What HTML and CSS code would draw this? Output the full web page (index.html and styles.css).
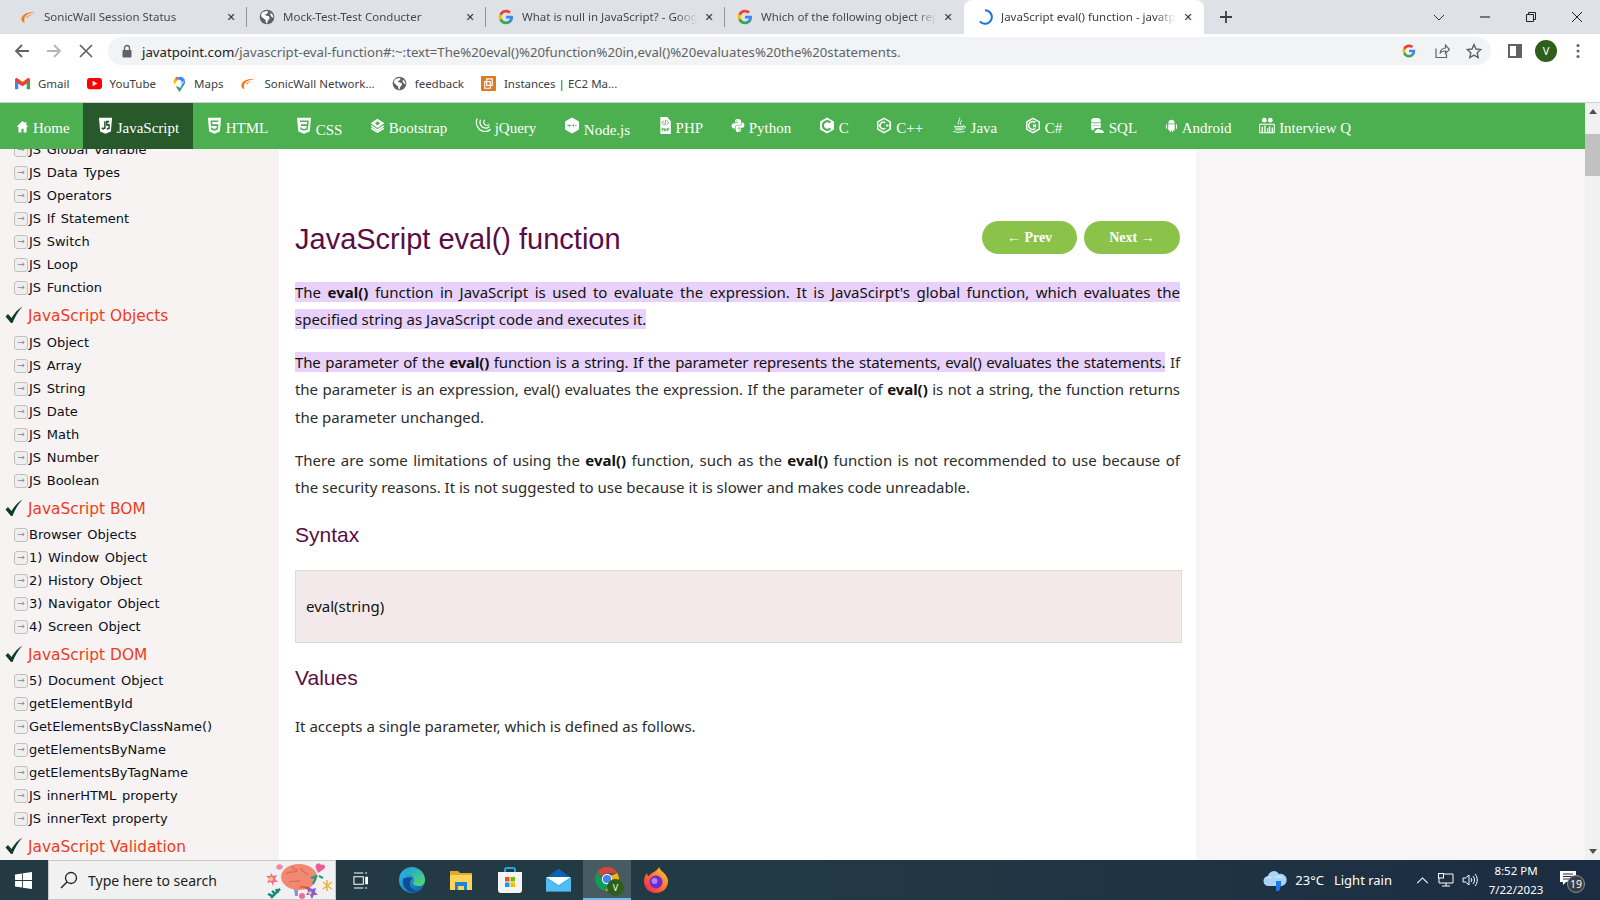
FILE: index.html
```html
<!DOCTYPE html>
<html lang="en">
<head>
<meta charset="utf-8">
<title>JavaScript eval() function - javatpoint</title>
<link rel="stylesheet" href="styles.css">
</head>
<body>
<svg class="defs" width="0" height="0" aria-hidden="true">
  <defs>
    <symbol id="g" viewBox="0 0 24 24">
      <path fill="#4285F4" d="M22.56 12.25c0-.78-.07-1.53-.2-2.25H12v4.26h5.92c-.26 1.37-1.04 2.53-2.21 3.31v2.77h3.57c2.08-1.92 3.28-4.74 3.28-8.09z"/>
      <path fill="#34A853" d="M12 23c2.97 0 5.46-.98 7.28-2.66l-3.57-2.77c-.98.66-2.23 1.06-3.71 1.06-2.86 0-5.29-1.93-6.16-4.53H2.18v2.84C3.99 20.53 7.7 23 12 23z"/>
      <path fill="#FBBC05" d="M5.84 14.09c-.22-.66-.35-1.36-.35-2.09s.13-1.43.35-2.09V7.07H2.18C1.43 8.55 1 10.22 1 12s.43 3.45 1.18 4.93l2.85-2.22.81-.62z"/>
      <path fill="#EA4335" d="M12 5.38c1.62 0 3.06.56 4.21 1.64l3.15-3.15C17.45 2.09 14.97 1 12 1 7.7 1 3.99 3.47 2.18 7.07l3.66 2.84c.87-2.6 3.3-4.53 6.16-4.53z"/>
    </symbol>
    <symbol id="sonic" viewBox="0 0 24 24">
      <path fill="#f47a20" d="M2 15C3 8 11 4 23 5 15 6 10 8 8 11 6 14 6 18 7 21 4 20 2 18 2 15z"/>
      <path fill="#f9a45c" d="M9 12c2-2 7-4 12-4-5 1-8 3-10 6z"/>
    </symbol>
    <symbol id="globe" viewBox="0 0 24 24">
      <circle cx="12" cy="12" r="11" fill="#5f6368"/>
      <path fill="#fff" d="M5 5c2 0 4-2 6-2l3 1-2 3-3 1 2 2 4 1 1 3-3 4-1 4c-2-1-2-3-2-5l-2-2-4-3-1-3zM17 6l3 2 2 5-3-1-2-3z"/>
    </symbol>
    <symbol id="chk" viewBox="0 0 18 18">
      <path fill="#0f3d2a" d="M0.500 10.500 3 8 6.500 12C9.500 7 13 3 17.500 0.500 13 5.500 10 10.500 7.500 17H6z"/>
    </symbol>
    <symbol id="n-home" viewBox="0 0 24 24"><path fill="#fff" d="M12 2 1 12.5h3.5V23h5.5v-7h4v7h5.500V12.500H23l-4-3.800V3.500h-3v2.400z"/></symbol>
    <symbol id="n-js" viewBox="0 0 24 24" preserveAspectRatio="none">
      <path fill="#fff" d="M1.500 1h21l-1.900 19.500L12 23.500l-8.600-3z"/>
      <path fill="none" stroke="#27592a" stroke-width="2.400" d="M11 6v9.500l-2.600 1.200L6 15.700M18 6.500h-4v4.500h3.700v5l-3.700 1"/>
    </symbol>
    <symbol id="n-html" viewBox="0 0 24 24" preserveAspectRatio="none">
      <path fill="#fff" d="M1.500 1h21l-1.900 19.500L12 23.500l-8.600-3z"/>
      <path fill="none" stroke="#4caf50" stroke-width="2.400" d="M18 6H7l.5 5.500H17l-.6 5.300L12 18l-4.300-1.200-.2-2"/>
    </symbol>
    <symbol id="n-css" viewBox="0 0 24 24" preserveAspectRatio="none">
      <path fill="#fff" d="M1.500 1h21l-1.900 19.500L12 23.500l-8.600-3z"/>
      <path fill="none" stroke="#4caf50" stroke-width="2.200" d="M6 6h12l-.6 5.500H7.500M17.400 11.500l-.7 5.300L12 18l-4.300-1.200-.2-2"/>
    </symbol>
    <symbol id="n-bs" viewBox="0 0 24 24">
      <path fill="#fff" d="M12 1 23 8.500 12 16 1 8.500z"/>
      <path fill="#4caf50" d="M12 5l4 3.500L12 12 8 8.500z"/>
      <path fill="none" stroke="#fff" stroke-width="2.400" d="M2 12.500 12 19.500l10-7M2 16.500 12 22.500l10-6"/>
    </symbol>
    <symbol id="n-jq" viewBox="0 0 24 24">
      <path fill="none" stroke="#fff" stroke-width="1.800" stroke-linecap="round" d="M3 2C0 10 5 21 15 21c3 0 6-1 8-3M8 4C6 10 10 16 16 16c2 0 4-.8 5-2M14 4c-2 4 0 8 4 8 1 0 2-.4 3-1"/>
    </symbol>
    <symbol id="n-node" viewBox="0 0 24 24">
      <path fill="#fff" d="M12 0 22.500 6v12L12 24 1.500 18V6z"/>
      <path fill="none" stroke="#4caf50" stroke-width="1.300" d="M5 12h2.500M9 12h2M13 12h2M16.500 12h2.500M8 10v4M14 10v4"/>
    </symbol>
    <symbol id="n-php" viewBox="0 0 24 24" preserveAspectRatio="none">
      <path fill="#fff" d="M4 0h12l6 6v18H4z"/>
      <path fill="none" stroke="#4caf50" stroke-width="1.400" d="M10 5 7 8l3 3M15 5l3 3-3 3M13.500 4l-2 8M7 20v-4h2v2H7M11 20v-4M11 18h2.500M13.500 16v4M16 20v-4h2v2h-2"/>
    </symbol>
    <symbol id="n-py" viewBox="0 0 24 24">
      <path fill="#fff" d="M12 1C7 1 7 3 7 4.500V7h5.500v1H5C2.500 8 1 10 1 12.500S2.500 17 5 17h2v-2.800C7 12.300 8.500 11 10.500 11h4c1.800 0 2.900-1.100 2.900-2.800V4.500C17.400 2.500 15 1 12 1z"/>
      <path fill="#fff" d="M12 23c5 0 5-2 5-3.500V17h-5.500v-1H19c2.500 0 4-2 4-4.500S21.500 7 19 7h-.6v2c0 2-1.500 3-3.500 3h-4.400C8.700 12 8 13 8 14.500v5C8 21.500 9 23 12 23z"/>
      <circle cx="10" cy="4" r="1" fill="#4caf50"/><circle cx="14" cy="20" r="1" fill="#4caf50"/>
    </symbol>
    <symbol id="n-c" viewBox="0 0 24 24">
      <path fill="#fff" d="M12 0 22.500 6v12L12 24 1.500 18V6z"/>
      <path fill="none" stroke="#4caf50" stroke-width="3.200" d="M17 7.500a6.500 6.500 0 1 0 0 9"/>
    </symbol>
    <symbol id="n-cpp" viewBox="0 0 24 24">
      <path fill="none" stroke="#fff" stroke-width="2.200" d="M12 1.300 21.400 6.600v10.800L12 22.700 2.600 17.400V6.600z"/>
      <path fill="none" stroke="#fff" stroke-width="2.400" d="M14 8a5 5 0 1 0 0 8M15 12h3M16.500 10.500v3M19 12h2.500M20.200 10.500v3"/>
    </symbol>
    <symbol id="n-cs" viewBox="0 0 24 24">
      <path fill="none" stroke="#fff" stroke-width="2.200" d="M12 1.300 21.400 6.600v10.800L12 22.700 2.600 17.400V6.600z"/>
      <path fill="none" stroke="#fff" stroke-width="2.400" d="M15.500 7.500a6 6 0 1 0 0 9"/>
      <path fill="none" stroke="#fff" stroke-width="1.200" d="M13 10v5M15.500 10v5M12 11.500h5M12 13.500h5"/>
    </symbol>
    <symbol id="n-java" viewBox="0 0 24 24">
      <path fill="none" stroke="#fff" stroke-width="1.400" stroke-linecap="round" d="M13 1c2 3-4 5-2 9M16 5c-3 2-2 4-1 6M5 13c4 1 10 1 14 0M6 15.500c3 .8 9 .8 12 0M7 18c3 .7 7 .7 10 0M4 21c5 1.500 11 1.500 16 0M19 13c3-1 4 2 0 4"/>
    </symbol>
    <symbol id="n-sql" viewBox="0 0 24 24">
      <path fill="#fff" d="M2 3c0-4 15-4 15 0v13H9c-2 0-3 2-3 3.500H4c-1.500 0-2-1-2-2z"/>
      <path fill="#fff" d="M10 24c-2 0-3-1-2.500-2.500.3-1 1-1.500 2-1.500 .5-2.500 5-3.500 7-1 2-.5 5 .5 6 5z"/>
      <path fill="none" stroke="#4caf50" stroke-width="1.300" d="M2 6.500c4 2 11 2 15 0M5 12h2M8.500 12h2M12 12h2"/>
    </symbol>
    <symbol id="n-and" viewBox="0 0 24 24">
      <path fill="#fff" d="M6 8.500C6 4.500 8.500 1.500 12 1.500s6 3 6 7zM6 9.500h12v10c0 1-.7 1.500-1.500 1.500H15v3h-2v-3h-2v3H9v-3H7.500C6.700 21 6 20.500 6 19.500zM2 9.500c1 0 1.800.6 1.800 1.500v6c0 1-.8 1.500-1.800 1.500zM22 9.500c-1 0-1.800.6-1.800 1.500v6c0 1 .8 1.500 1.800 1.500z"/>
    </symbol>
    <symbol id="n-int" viewBox="0 0 24 24">
      <circle cx="8" cy="4" r="3.500" fill="#fff"/><circle cx="17" cy="4" r="3.500" fill="#fff"/>
      <path fill="none" stroke="#fff" stroke-width="1.600" d="M1 10v13M23 10v13M1 10h22M1 23h22"/>
      <path fill="#fff" d="M4 14h2v9H4zM8 12h2v11H8zM12 16h2v7h-2zM15 13h2v10h-2zM19 15h2v8h-2z"/>
    </symbol>
    <symbol id="chrome" viewBox="0 0 24 24">
      <path fill="#db4437" d="M12 1a11 11 0 0 1 9.530 5.500H12a5.500 5.500 0 0 0-5 3.200L3.300 5.200A11 11 0 0 1 12 1z"/>
      <path fill="#0f9d58" d="M3.300 5.200 7.800 13a5.500 5.500 0 0 0 5.800 4.200l-3.100 5.700A11 11 0 0 1 3.300 5.200z"/>
      <path fill="#f4b400" d="M21.530 6.500A11 11 0 0 1 10.500 22.900L15.300 15a5.500 5.500 0 0 0 .4-6z"/>
      <circle cx="12" cy="12" r="4.800" fill="#fff"/><circle cx="12" cy="12" r="3.800" fill="#4285f4"/>
    </symbol>
  </defs>
</svg>

<header class="chrome">
  <div class="tabs">
    <div class="tab sep"><svg class="fav"><use href="#sonic"/></svg><span class="tab-t">SonicWall Session Status</span><span class="x">✕</span></div>
    <div class="tab sep"><svg class="fav"><use href="#globe"/></svg><span class="tab-t">Mock-Test-Test Conducter</span><span class="x">✕</span></div>
    <div class="tab sep"><svg class="fav"><use href="#g"/></svg><span class="tab-t">What is null in JavaScript? - Google Search</span><span class="x">✕</span></div>
    <div class="tab"><svg class="fav"><use href="#g"/></svg><span class="tab-t">Which of the following object represents</span><span class="x">✕</span></div>
    <div class="tab active">
      <svg class="fav" viewBox="0 0 16 16"><path d="M8 1.200a6.800 6.800 0 1 1-5.200 11.200" fill="none" stroke="#1a73e8" stroke-width="2"/></svg>
      <span class="tab-t">JavaScript eval() function - javatpoint</span><span class="x">✕</span>
    </div>
    <svg class="newtab" viewBox="0 0 14 14"><path d="M7 1v12M1 7h12" stroke="#3c4043" stroke-width="1.800"/></svg>
    <div class="winctl">
      <svg viewBox="0 0 12 12"><path d="M1 4l5 5 5-5" fill="none" stroke="#333" stroke-width="1"/></svg>
      <svg viewBox="0 0 12 12"><path d="M1 6h10" stroke="#222" stroke-width="1.100"/></svg>
      <svg viewBox="0 0 12 12"><path d="M1.500 3.500h7v7h-7zM3.500 3.500v-2h7v7h-2" fill="none" stroke="#222" stroke-width="1"/></svg>
      <svg viewBox="0 0 12 12"><path d="M1 1l10 10M11 1 1 11" stroke="#222" stroke-width="1"/></svg>
    </div>
  </div>
  <div class="toolbar">
    <svg class="tb-ico back" viewBox="0 0 16 16"><path d="M15 8H2M8 2 2 8l6 6" fill="none" stroke="#5f6368" stroke-width="1.800"/></svg>
    <svg class="tb-ico fwd" viewBox="0 0 16 16"><path d="M1 8h13M8 2l6 6-6 6" fill="none" stroke="#b3b6ba" stroke-width="1.800"/></svg>
    <svg class="tb-ico stop" viewBox="0 0 14 14"><path d="M1 1l12 12M13 1 1 13" stroke="#5f6368" stroke-width="1.700"/></svg>
    <div class="omni">
      <svg class="lock" viewBox="0 0 10 14"><path d="M2.500 6V4a2.500 2.500 0 0 1 5 0v2" fill="none" stroke="#5f6368" stroke-width="1.300"/><rect x="0.500" y="6" width="9" height="7.500" rx="1" fill="#5f6368"/></svg>
      <span class="url"><span class="dom">javatpoint.com</span>/javascript-eval-function#:~:text=The%20eval()%20function%20in,eval()%20evaluates%20the%20statements.</span>
      <svg class="om-g"><use href="#g"/></svg>
      <svg class="om-i" viewBox="0 0 16 16"><path d="M2 5.500V14.500H12.500V11M6 10.500C6.500 7 9 5 11.500 5V2l4 4.500-4 4V8C9.500 8 7 8.500 6 10.500z" fill="none" stroke="#5f6368" stroke-width="1.200"/></svg>
      <svg class="om-i" viewBox="0 0 16 16"><path d="M8 1.500l2 4.500 4.800.5-3.600 3.200 1 4.800L8 12.100 3.800 14.500l1-4.800L1.200 6.500 6 6z" fill="none" stroke="#5f6368" stroke-width="1.400"/></svg>
    </div>
    <svg class="panel" viewBox="0 0 14 14"><path d="M1 1h12v12H1z" fill="none" stroke="#5f6368" stroke-width="2"/><path d="M8 1h5v12H8z" fill="#5f6368"/></svg>
    <span class="avatar">V</span>
    <svg class="dots" viewBox="0 0 4 16"><circle cx="2" cy="2.500" r="1.500" fill="#5f6368"/><circle cx="2" cy="8" r="1.500" fill="#5f6368"/><circle cx="2" cy="13.500" r="1.500" fill="#5f6368"/></svg>
  </div>
  <div class="bookmarks">
    <span class="bm">
      <svg class="bm-i" viewBox="0 0 16 12"><path fill="#ea4335" d="M0 2v2l8 5 8-5V2c0-1.500-1.700-2.300-3-1.300L8 4.500 3 .7C1.700-.3 0 .5 0 2z"/><path fill="#4285f4" d="M0 3.500V12h3.500V6z"/><path fill="#34a853" d="M16 3.500V12h-3.500V6z"/></svg>Gmail</span>
    <span class="bm">
      <svg class="bm-i" viewBox="0 0 16 12"><rect width="16" height="12" rx="3" fill="#f00"/><path d="M6 3l5 3-5 3z" fill="#fff"/></svg>YouTube</span>
    <span class="bm">
      <svg class="bm-i maps" viewBox="0 0 12 16"><path fill="#34a853" d="M2 10 6 16l2-4z"/><path fill="#fbbc05" d="M1 8.500 4 4 1.500 2A6 6 0 0 0 1 8.500z"/><path fill="#4285f4" d="M4 1.500A6 6 0 0 1 11.500 4L7 8z"/><path fill="#ea4335" d="M1.500 2 4 4.500 4.500 .8A6 6 0 0 0 1.500 2z"/><path fill="#4285f4" d="M11.500 4A6 6 0 0 1 10.500 9L6 16 8 9z"/><circle cx="6" cy="6" r="2.100" fill="#fff"/></svg>Maps</span>
    <span class="bm sw"><svg class="bm-i"><use href="#sonic"/></svg>SonicWall Network...</span>
    <span class="bm"><svg class="bm-i"><use href="#globe"/></svg>feedback</span>
    <span class="bm">
      <svg class="bm-i" viewBox="0 0 16 16"><rect width="16" height="16" rx="1" fill="#e2791c"/><path d="M6 3h6v7H6zM4 6h6v7H4z" fill="none" stroke="#fff" stroke-width="1.200"/></svg>Instances | EC2 Ma...</span>
  </div>
</header>

<div class="viewport">
  <div class="page">
    <nav class="nav">
      <a class="nv"><svg class="ni home"><use href="#n-home"/></svg>Home</a>
      <a class="nv on"><svg class="ni"><use href="#n-js"/></svg>JavaScript</a>
      <a class="nv"><svg class="ni"><use href="#n-html"/></svg>HTML</a>
      <a class="nv low"><svg class="ni wide"><use href="#n-css"/></svg><span>CSS</span></a>
      <a class="nv"><svg class="ni"><use href="#n-bs"/></svg>Bootstrap</a>
      <a class="nv"><svg class="ni wide"><use href="#n-jq"/></svg>jQuery</a>
      <a class="nv low"><svg class="ni wide"><use href="#n-node"/></svg><span>Node.js</span></a>
      <a class="nv"><svg class="ni mid"><use href="#n-php"/></svg>PHP</a>
      <a class="nv"><svg class="ni mid"><use href="#n-py"/></svg>Python</a>
      <a class="nv"><svg class="ni wide"><use href="#n-c"/></svg>C</a>
      <a class="nv"><svg class="ni wide"><use href="#n-cpp"/></svg>C++</a>
      <a class="nv"><svg class="ni wide"><use href="#n-java"/></svg>Java</a>
      <a class="nv"><svg class="ni wide"><use href="#n-cs"/></svg>C#</a>
      <a class="nv"><svg class="ni"><use href="#n-sql"/></svg>SQL</a>
      <a class="nv"><svg class="ni thin"><use href="#n-and"/></svg>Android</a>
      <a class="nv"><svg class="ni wide"><use href="#n-int"/></svg>Interview Q</a>
    </nav>
    <div class="cols">
      <aside class="side">
        <div class="side-in">
          <a class="ln">JS Global Variable</a>
          <a class="ln">JS Data Types</a>
          <a class="ln">JS Operators</a>
          <a class="ln">JS If Statement</a>
          <a class="ln">JS Switch</a>
          <a class="ln">JS Loop</a>
          <a class="ln">JS Function</a>
          <h3 class="sh first"><svg class="chk"><use href="#chk"/></svg>JavaScript Objects</h3>
          <a class="ln">JS Object</a>
          <a class="ln">JS Array</a>
          <a class="ln">JS String</a>
          <a class="ln">JS Date</a>
          <a class="ln">JS Math</a>
          <a class="ln">JS Number</a>
          <a class="ln">JS Boolean</a>
          <h3 class="sh"><svg class="chk"><use href="#chk"/></svg>JavaScript BOM</h3>
          <a class="ln">Browser Objects</a>
          <a class="ln">1) Window Object</a>
          <a class="ln">2) History Object</a>
          <a class="ln">3) Navigator Object</a>
          <a class="ln">4) Screen Object</a>
          <h3 class="sh"><svg class="chk"><use href="#chk"/></svg>JavaScript DOM</h3>
          <a class="ln">5) Document Object</a>
          <a class="ln">getElementById</a>
          <a class="ln">GetElementsByClassName()</a>
          <a class="ln">getElementsByName</a>
          <a class="ln">getElementsByTagName</a>
          <a class="ln">JS innerHTML property</a>
          <a class="ln">JS innerText property</a>
          <h3 class="sh"><svg class="chk"><use href="#chk"/></svg>JavaScript Validation</h3>
        </div>
      </aside>
      <main class="main">
        <div class="head">
          <h1>JavaScript eval() function</h1>
          <a class="btn">← Prev</a>
          <a class="btn next">Next →</a>
        </div>
        <p>
          <span class="jl"><mark>The <b>eval()</b> function in JavaScript is used to evaluate the expression. It is JavaScirpt's global function, which evaluates the</mark></span>
          <span class="el"><mark>specified string as JavaScript code and executes it.</mark></span>
        </p>
        <p>
          <span class="jl tight"><mark>The parameter of the <b>eval()</b> function is a string. If the parameter represents the statements, eval() evaluates the statements.</mark> If</span>
          <span class="jl tight2">the parameter is an expression, eval() evaluates the expression. If the parameter of <b>eval()</b> is not a string, the function returns</span>
          <span class="el">the parameter unchanged.</span>
        </p>
        <p>
          <span class="jl">There are some limitations of using the <b>eval()</b> function, such as the <b>eval()</b> function is not recommended to use because of</span>
          <span class="el">the security reasons. It is not suggested to use because it is slower and makes code unreadable.</span>
        </p>
        <h2>Syntax</h2>
        <div class="code">eval(string)</div>
        <h2>Values</h2>
        <p>It accepts a single parameter, which is defined as follows.</p>
      </main>
      <div class="rail"></div>
    </div>
  </div>
  <div class="sbar">
    <span class="arr up"></span>
    <span class="thumb"></span>
    <span class="arr dn"></span>
  </div>
</div>

<footer class="task">
  <svg class="win" viewBox="0 0 18 18"><path fill="#fff" d="M0 2.600 7.400 1.600v7H0zM8.300 1.400 18 0v8.600H8.300zM0 9.500h7.400v7L0 15.400zM8.300 9.500H18V18l-9.700-1.300z"/></svg>
  <div class="search">
    <svg class="mag" viewBox="0 0 18 18"><circle cx="11" cy="7" r="5.500" fill="none" stroke="#222" stroke-width="1.300"/><path d="M7 11 1 17" stroke="#222" stroke-width="1.500"/></svg>
    <span class="s-t">Type here to search</span>
    <svg class="brain" viewBox="0 0 72 40">
      <path fill="#f0718e" d="M10 13l2 3 4-1-2 4 3 3-4 0-1 4-2-4-4 1 2-4-3-3 4 0z"/>
      <circle cx="10" cy="19" r="2" fill="#f5d35a"/>
      <ellipse cx="38" cy="17" rx="18" ry="13" fill="#f08872"/>
      <path d="M25 14c4-4 8-1 11-3M28 22c4-2 7 1 11-2M40 8c1 5 5 4 7 7M31 6c1 3 3 4 6 4" fill="none" stroke="#d86a58" stroke-width="1.200"/>
      <path d="M38 29l3-2 6 3 1-3-8-1z" fill="#e84a2a"/>
      <path d="M33 29l4 1v6h-3z" fill="#9a8fd0"/>
      <path fill="#e95d92" d="M55 8c-2-4 4-6 5-3 2-2 6 1 3 4l-6 4z"/>
      <path fill="none" stroke="#1f9e86" stroke-width="2" d="M52 24l4-9M50 18l6-2M58 16l4 2"/>
      <path fill="#8a5fd6" d="M48 27l3 2 4-1-1 4 3 3-4 0-2 4-2-4-4 0 2-3-1-4z"/>
      <circle cx="49" cy="33" r="1.800" fill="#f5d35a"/>
      <path stroke="#e8b13c" stroke-width="1.500" d="M62 22l9 7M71 22l-9 7M66 20v11"/>
      <path fill="#f08aa8" d="M16 5l3-1 3 2-1 3-3 1-3-2z"/>
      <circle cx="41" cy="36" r="3" fill="#f06aa0"/>
      <path stroke="#148c78" stroke-width="2.500" fill="none" d="M10 38l9-9M11 31l3 3M15 29l2 4M7 34l4 2"/>
    </svg>
  </div>
  <svg class="taskview" viewBox="0 0 16 18"><path d="M1 1h10M1 17h10M1 5h10v8H1z" fill="none" stroke="#fff" stroke-width="1.100"/><path d="M13 1h2M13 17h2" stroke="#fff" stroke-width="1.100"/><rect x="13" y="5" width="3" height="8" fill="#fff"/></svg>
  <svg class="app edge" viewBox="0 0 26 26">
    <defs><linearGradient id="eg" x1="0" y1="0" x2="1" y2="1"><stop offset="0" stop-color="#35c1f1"/><stop offset="1" stop-color="#0c59a4"/></linearGradient><linearGradient id="eg2" x1="0" y1="0" x2="1" y2="1"><stop offset="0" stop-color="#1b9de2"/><stop offset="1" stop-color="#5ddc63"/></linearGradient></defs>
    <circle cx="13" cy="13" r="13" fill="url(#eg)"/>
    <path fill="url(#eg2)" d="M8 1.500C15 -1 26 3 26 13c0 4-3 6-6 6-4 0-6-1-6-3 0-1 1-1.500 1-3 0-4-4-7-9-5C5 9 4 11 4 11 4 7 5 3 8 1.500z"/>
    <path fill="#0e4f94" d="M4 12c-1 6 2 11 8 13 3 .5 6 0 8-1-4 0-8-2-9-6-.5-3 1-6 3-7-4-2-9 0-10 1z"/>
  </svg>
  <svg class="app folder" viewBox="0 0 24 24"><path fill="#e4a92c" d="M1 3h8l2 2h12v4H1z"/><path fill="#fdd45b" d="M1 7h22v15H1z"/><path fill="#1a86d0" d="M6 22v-8h12v8h-3v-4H9v4z"/></svg>
  <svg class="app store" viewBox="0 0 24 26"><path fill="none" stroke="#26a6e4" stroke-width="2" d="M7 6V3c0-1 1-2 2-2h6c1 0 2 1 2 2v3"/><path fill="#f4f4f4" d="M0 5h24v18c0 2-1 3-3 3H3c-2 0-3-1-3-3z"/><path fill="#f25022" d="M7 10h4.500v4.500H7z"/><path fill="#7fba00" d="M12.500 10H17v4.500h-4.500z"/><path fill="#00a4ef" d="M7 15.500h4.500V20H7z"/><path fill="#ffb900" d="M12.500 15.500H17V20h-4.500z"/></svg>
  <svg class="app mail" viewBox="0 0 24 22"><path fill="#0a63b0" d="M0 9 12 0l12 9v3H0z"/><path fill="#28a8ea" d="M0 9h24v13H0z"/><path fill="#fff" d="M0 8h24L12 16z"/><path fill="#64c5f5" d="M0 9l12 8 12-8v13H0z" opacity=".7"/></svg>
  <div class="tk-active">
    <svg class="ch"><use href="#chrome"/></svg>
    <span class="ch-v">V</span>
  </div>
  <svg class="app fox" viewBox="0 0 24 26">
    <defs><linearGradient id="fg" x1="1" y1="0" x2="0" y2="1"><stop offset="0" stop-color="#ffd23e"/><stop offset=".55" stop-color="#ff6a2a"/><stop offset="1" stop-color="#f5156c"/></linearGradient></defs>
    <path fill="url(#fg)" d="M15 0c1 3 3 4 5 6 3 3 4 6 4 8 0 7-5 12-12 12S0 21 0 14c0-3 1-6 3-8 0 2 1 3 2 3 1-2 3-3 5-4 2-1 4-3 5-5z"/>
    <circle cx="12" cy="15" r="6.500" fill="#6c2bd0"/><circle cx="10.500" cy="14" r="3" fill="#b47cf0"/>
  </svg>
  <div class="tray">
    <svg class="cloud" viewBox="0 0 24 22">
      <path fill="#a9d4f7" d="M6 17a5 5 0 0 1-1-10 6 6 0 0 1 11-2 5.500 5.500 0 0 1 3 12z"/>
      <path fill="#fff" opacity=".55" d="M3 9c3-2 6-1 7 0 2-2 8-3 10 0-6-1-12 0-17 0z"/>
      <path fill="#1e78e6" d="M13 12h5v5l-2 5h-3z"/>
    </svg>
    <span class="temp">23°C</span>
    <span class="rain">Light rain</span>
    <svg class="caret" viewBox="0 0 14 8"><path d="M1 7l6-6 6 6" fill="none" stroke="#fff" stroke-width="1.200"/></svg>
    <svg class="net" viewBox="0 0 16 14"><path d="M4 1h11v9H1V5" fill="none" stroke="#fff" stroke-width="1"/><rect x="0.500" y="0.500" width="5" height="4.500" fill="#203a48" stroke="#fff"/><path d="M8 10v3M4 13h8" stroke="#fff"/></svg>
    <svg class="vol" viewBox="0 0 16 14"><path d="M1 5h2.500L7 2v10L3.500 9H1zM9 5c1 1 1 3 0 4M11 3c2 2 2 6 0 8M13 1c3 3 3 9 0 12" fill="none" stroke="#fff" stroke-width="1"/></svg>
    <div class="clock"><span>8:52 PM</span><span>7/22/2023</span></div>
    <div class="notif">
      <svg viewBox="0 0 16 14"><path fill="#fff" d="M0 0h16v11H6l-3 3v-3H0z"/><path d="M3 3h10M3 5.500h10M3 8h6" stroke="#1c2b40"/></svg>
      <span class="badge">19</span>
    </div>
  </div>
</footer>
</body>
</html>
```

FILE: styles.css
```css
* { box-sizing: border-box; }
html, body { margin: 0; height: 100%; overflow: hidden; }
body {
  display: flex;
  flex-direction: column;
  height: 900px;
  background: #fff;
  font-family: "Noto Sans", sans-serif;
  color: #111;
}
.defs { position: absolute; }
svg { display: block; flex: none; }

/* Browser chrome */
.chrome { flex: none; height: 103px; border-bottom: 1px solid #cfd1d3; }
.tabs { display: flex; align-items: center; height: 34px; padding-left: 8px; background: #dee1e6; }
.tab {
  display: flex;
  align-items: center;
  width: 239px;
  height: 34px;
  padding: 0 10px 0 12px;
  font-size: 11.5px;
  color: #45494e;
  position: relative;
}
.tab.sep::after {
  content: "";
  position: absolute;
  right: 0;
  top: 7px;
  height: 20px;
  border-right: 1px solid #92959a;
}
.tab.active { background: #fff; border-radius: 8px 8px 0 0; color: #3c4043; width: 240px; padding-left: 13px; }
.fav { width: 16px; height: 16px; margin-right: 8px; }
.tab-t {
  flex: 1;
  white-space: nowrap;
  overflow: hidden;
  padding-bottom: 2px;
  -webkit-mask-image: linear-gradient(to right, #000 88%, transparent);
  mask-image: linear-gradient(to right, #000 88%, transparent);
}
.x { width: 12px; margin-left: 6px; font: 11px "DejaVu Sans", sans-serif; color: #333; text-align: center; }
.newtab { width: 14px; height: 14px; margin-left: 15px; }
.winctl { display: flex; margin-left: auto; gap: 34px; padding-right: 17px; align-items: center; }
.winctl svg { width: 12px; height: 12px; }

.toolbar { display: flex; align-items: center; height: 34px; background: #fff; padding-left: 14px; }
.tb-ico { width: 16px; height: 16px; }
.fwd { margin-left: 16px; }
.stop { width: 14px; height: 14px; margin-left: 17px; }
.omni {
  display: flex;
  align-items: center;
  margin-left: 15px;
  width: 1383px;
  height: 28px;
  border-radius: 14px;
  background: #f1f3f4;
  padding-left: 14px;
}
.lock { width: 10px; height: 14px; margin-right: 10px; }
.url { flex: 1; padding-top: 2px; font-size: 13.2px; color: #5f6368; white-space: nowrap; }
.dom { color: #202124; }
.om-g { width: 14px; height: 14px; margin-right: 18px; }
.om-i { width: 16px; height: 16px; margin-right: 16px; }
.om-i:last-child { margin-right: 9px; }
.panel { width: 14px; height: 14px; margin-left: 17px; }
.avatar {
  width: 22px;
  height: 22px;
  margin-left: 13px;
  border-radius: 50%;
  background: #2d5f1a;
  color: #fff;
  font-size: 11px;
  line-height: 22px;
  text-align: center;
}
.dots { width: 4px; height: 16px; margin-left: 19px; }

.bookmarks { display: flex; align-items: center; height: 31px; padding: 0 0 0 15px; font-size: 11.5px; color: #3c4043; gap: 17px; background: #fff; }
.bm { display: flex; align-items: center; white-space: nowrap; }
.bm-i { width: 15px; height: 15px; margin-right: 8px; }
.sw .bm-i { margin-right: 9px; }
.maps { width: 13px; height: 16px; }

/* Page viewport */
.viewport { flex: 1; display: flex; min-height: 0; }
.page { flex: 1; display: flex; flex-direction: column; min-width: 0; }
.nav {
  flex: none;
  display: flex;
  height: 46px;
  background: #4caf50;
  font: 15px "Liberation Serif", serif;
  color: #fff;
  position: relative;
  z-index: 1;
}
.nv { display: flex; align-items: center; gap: 4px; padding: 4px 13px 0 14.5px; white-space: nowrap; }
.nv:first-child { padding-left: 16px; }
.nv.on { background: #27592a; padding-left: 15px; padding-right: 14px; }
.nv.on + .nv { padding-left: 13.5px; }
.ni { width: 15px; height: 17px; position: relative; top: -3px; }
.ni.wide { width: 16px; }
.ni.mid { width: 14px; }
.ni.thin { width: 13px; }
.ni.home { width: 13px; height: 13px; top: -2px; }
.low span { position: relative; top: 2px; }

.cols { flex: 1; display: flex; min-height: 0; }
.side { flex: none; width: 279px; background: #f7f3f3; overflow: hidden; }
.side-in { margin-top: -11px; }
.ln {
  display: flex;
  align-items: center;
  height: 23px;
  padding-left: 29px;
  position: relative;
  font: 13px "DejaVu Sans", sans-serif;
  word-spacing: 1.5px;
  color: #0a0f1a;
  white-space: nowrap;
}
.ln::before {
  content: "→";
  position: absolute;
  left: 14px;
  top: 5px;
  width: 12px;
  height: 12px;
  border: 1px solid #c0c0c0;
  border-radius: 3px;
  background: #efefef;
  font: 9px/10px "DejaVu Sans", sans-serif;
  text-align: center;
  color: #8a8a8a;
}
.sh {
  margin: 0;
  height: 31px;
  padding: 3px 0 0 28px;
  position: relative;
  font: 400 15.4px/28px "DejaVu Sans", sans-serif;
  color: #ef3b1b;
  white-space: nowrap;
}
.sh.first { height: 32px; }
.chk { position: absolute; left: 5px; top: 7px; width: 18px; height: 18px; }

.main { flex: none; width: 917px; background: #fff; padding: 72px 14px 0 16px; overflow: hidden; }
.head { display: flex; align-items: flex-start; height: 33px; margin-bottom: 25px; padding-right: 2px; }
h1 { flex: 1; margin: 0; font: 400 29px/36px "Liberation Sans", sans-serif; color: #5a0d45; }
.btn {
  width: 95px;
  height: 33px;
  border-radius: 17px;
  background: #8bc34a;
  color: #fff;
  font: 700 14px/33px "Liberation Serif", serif;
  text-align: center;
}
.next { margin-left: 7px; width: 96px; }
.main p { margin: 0 2px 16px 0; font-size: 15px; line-height: 27.15px; color: #2c2c2c; }
.jl { display: block; text-align: justify; text-align-last: justify; }
.el { display: block; }
.tight { letter-spacing: -0.15px; }
.tight2 { letter-spacing: -0.05px; }
.main b { color: #111; }
mark { background: #e8d1fb; color: #111; }
h2 { margin: 19px 0 20px; font: 400 21px/30px "Liberation Sans", sans-serif; color: #5a0d45; }
.code {
  height: 73px;
  margin: 20px 0;
  padding-left: 10px;
  background: #f3e9ea;
  border: 1px solid #d8dfc8;
  font-size: 15px;
  line-height: 71px;
  color: #111;
}
.rail { flex: 1; background: #f7f5f5; }

.sbar { flex: none; width: 15px; display: flex; flex-direction: column; align-items: center; background: #f1f1f1; padding-top: 6px; }
.arr { width: 0; height: 0; border-left: 4px solid transparent; border-right: 4px solid transparent; }
.up { border-bottom: 5px solid #505050; }
.dn { border-top: 5px solid #505050; margin-top: auto; margin-bottom: 6px; }
.thumb { width: 15px; height: 42px; margin-top: 20px; background: #c1c1c1; }

/* Taskbar */
.task {
  flex: none;
  height: 40px;
  display: flex;
  align-items: center;
  background: linear-gradient(to right, #233a44 0, #223a44 50%, #1c2c42 100%);
  color: #fff;
}
.win { width: 17px; height: 17px; margin-left: 15px; }
.search {
  display: flex;
  align-items: center;
  width: 288px;
  height: 40px;
  margin-left: 16px;
  background: #f1f1f1;
  border: 1px solid #c8c8c8;
  padding-left: 11px;
}
.mag { width: 18px; height: 18px; }
.s-t { flex: 1; margin-left: 10px; font-size: 14px; color: #222; white-space: nowrap; }
.brain { width: 72px; height: 38px; margin-right: 2px; transform: scale(1.05); }
.taskview { width: 15px; height: 17px; margin-left: 17px; }
.app { width: 26px; height: 26px; }
.edge { margin-left: 31px; }
.folder { width: 24px; height: 24px; margin-left: 24px; }
.store { width: 24px; height: 26px; margin-left: 25px; }
.mail { width: 25px; height: 24px; margin-left: 24px; }
.tk-active {
  width: 48px;
  height: 40px;
  margin-left: 12px;
  background: #475b63;
  border-bottom: 2px solid #76b9ed;
  position: relative;
  display: flex;
  align-items: center;
  justify-content: center;
}
.ch { width: 26px; height: 26px; }
.ch-v {
  position: absolute;
  left: 24px;
  top: 19px;
  width: 17px;
  height: 17px;
  border-radius: 50%;
  background: #2d5f1a;
  font-size: 9px;
  line-height: 17px;
  text-align: center;
}
.fox { width: 24px; height: 26px; margin-left: 13px; }
.tray { margin-left: auto; display: flex; align-items: center; font-size: 13px; }
.cloud { width: 24px; height: 22px; }
.temp { margin-left: 8px; }
.rain { margin-left: 10px; white-space: nowrap; }
.caret { width: 13px; height: 7px; margin-left: 24px; }
.net { width: 16px; height: 14px; margin-left: 9px; }
.vol { width: 16px; height: 14px; margin-left: 8px; }
.clock { display: flex; flex-direction: column; align-items: center; width: 60px; margin-left: 8px; font-size: 11.5px; line-height: 19px; }
.notif { position: relative; width: 40px; height: 40px; margin-left: 14px; }
.notif svg { width: 16px; height: 14px; margin: 11px 0 0 0; }
.badge {
  position: absolute;
  left: 7px;
  top: 15px;
  width: 18px;
  height: 18px;
  border-radius: 50%;
  background: #3a3f44;
  border: 1px solid #8d9196;
  font-size: 10.5px;
  line-height: 16px;
  text-align: center;
}
```
